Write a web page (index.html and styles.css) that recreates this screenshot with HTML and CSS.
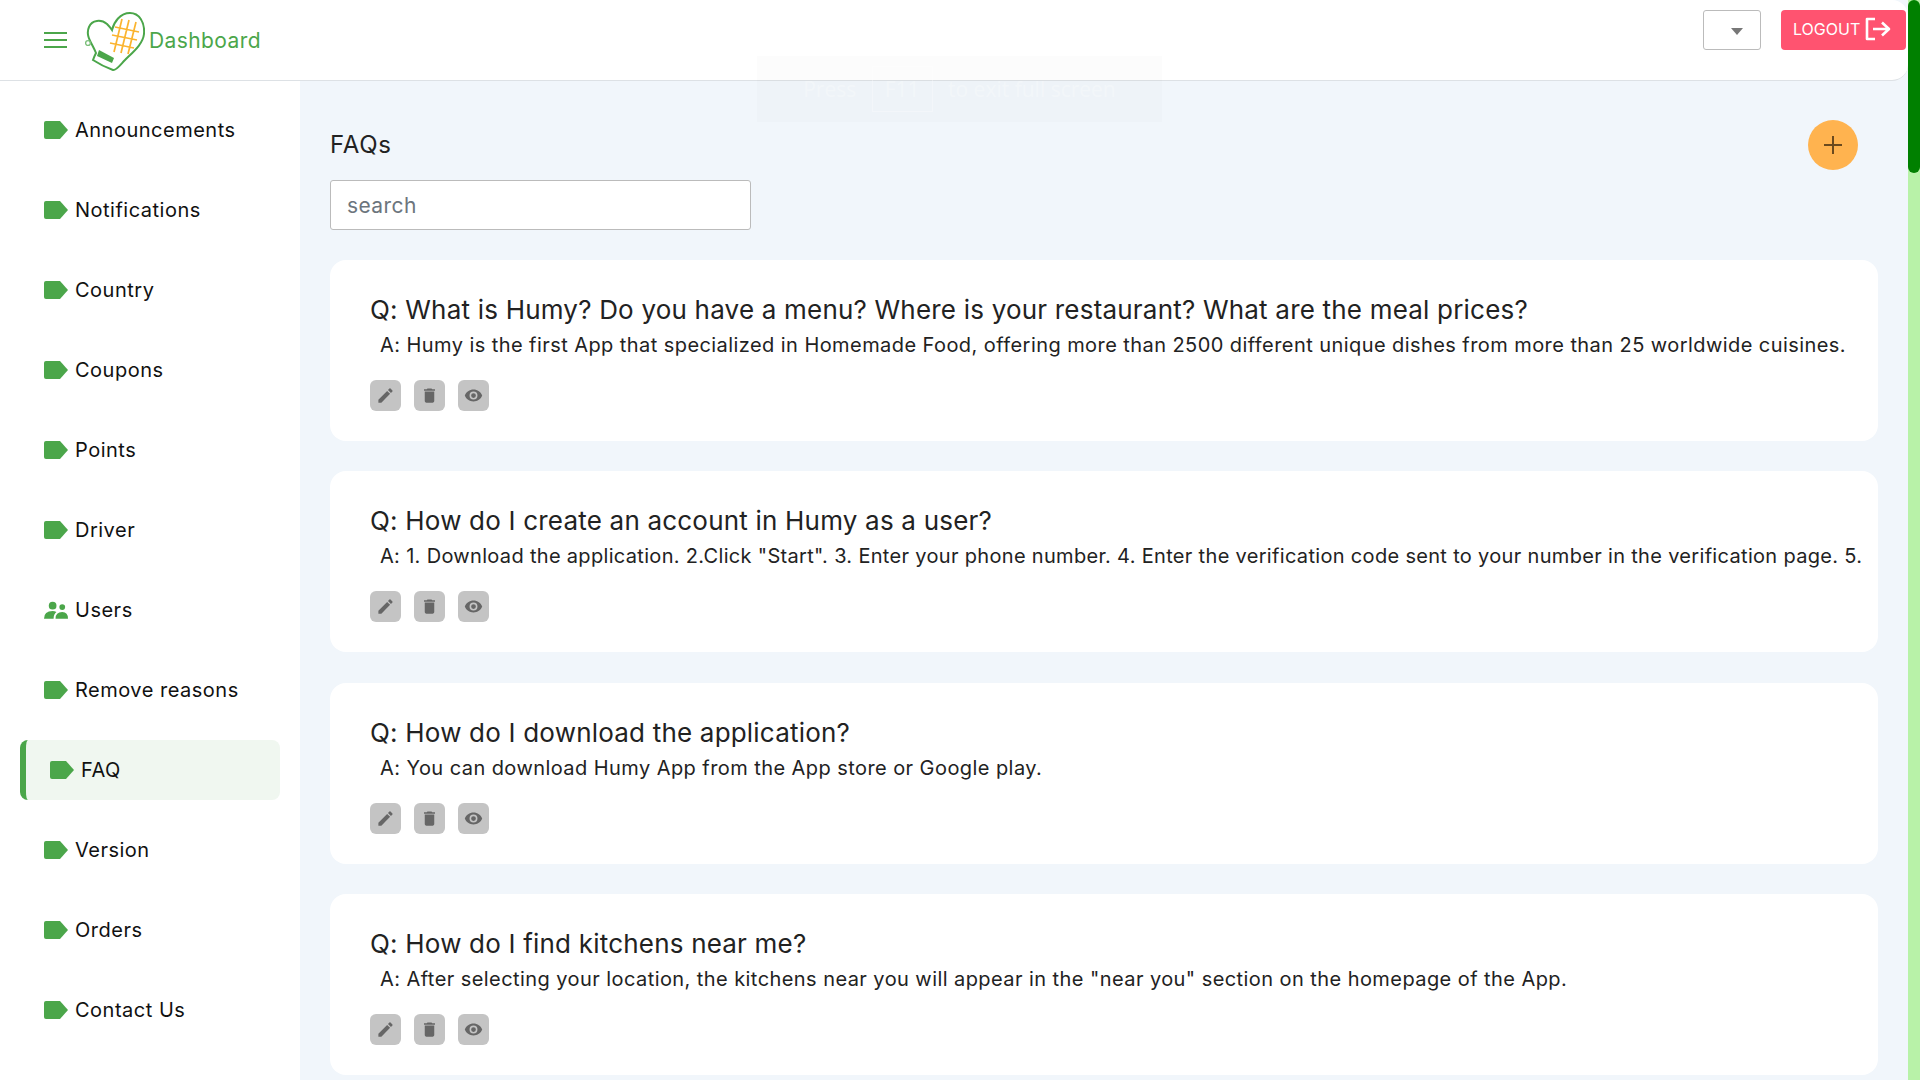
FILE: index.html
```html
<!DOCTYPE html>
<html lang="en">

<head>
    <meta charset="UTF-8">
    <title>Dashboard</title>
    <link rel="stylesheet" href="styles.css">
</head>

<body>
    <div class="app">
        <header class="topbar">
            <div class="brand">
                <button class="menu-btn" aria-label="menu"><span></span><span></span><span></span></button>
                <svg class="logo" viewBox="0 0 60 62" width="60" height="62">
                    <path d="M11 43 C7 33 0 26 4 17 C7 10 16 9 22 14 C25 17 27 20 27 20 C29 12 35 3 45 3 C54 3 60 12 59 24 C58 34 48 42 40 50 C36 54 31 61 28 60 C20 57 14 54 8 50 C9 47 10 45 11 43 Z" fill="none" stroke="#4ba64a" stroke-width="2"/>
                    <path d="M14 40 L12 46 L27 53 L29 48 Z" fill="#4ba64a"/>
                    <circle cx="3" cy="33" r="2.400" fill="none" stroke="#7cbf7b" stroke-width="1.400"/>
                    <path d="M30 17 L54 22 M27 25 L52 30 M25 33 L49 38 M37 9 L29 42 M44 10 L36 43 M51 12 L43 44" fill="none" stroke="#fbb42f" stroke-width="1.700"/>
                </svg>
                <span class="brand-name">Dashboard</span>
            </div>
            <div class="top-actions">
                <button class="lang-select" aria-label="language"><span class="caret"></span></button>
                <button class="logout-btn">LOGOUT
                    <svg viewBox="0 0 26 24" width="26" height="24">
                        <path d="M10 2 H2 V22 H10 M8 12 H24 M17 5.500 L24 12 L17 18.500" fill="none" stroke="#fff" stroke-width="2.600" stroke-linejoin="round"/>
                    </svg>
                </button>
            </div>
        </header>

        <div class="layout">
            <nav class="sidebar">
                <a class="nav-item"><svg class="tag" viewBox="0 0 24 18"><path d="M2 0 H16 L24 9 L16 18 H2 Q0 18 0 16 V2 Q0 0 2 0 Z"/></svg>Announcements</a>
                <a class="nav-item"><svg class="tag" viewBox="0 0 24 18"><path d="M2 0 H16 L24 9 L16 18 H2 Q0 18 0 16 V2 Q0 0 2 0 Z"/></svg>Notifications</a>
                <a class="nav-item"><svg class="tag" viewBox="0 0 24 18"><path d="M2 0 H16 L24 9 L16 18 H2 Q0 18 0 16 V2 Q0 0 2 0 Z"/></svg>Country</a>
                <a class="nav-item"><svg class="tag" viewBox="0 0 24 18"><path d="M2 0 H16 L24 9 L16 18 H2 Q0 18 0 16 V2 Q0 0 2 0 Z"/></svg>Coupons</a>
                <a class="nav-item"><svg class="tag" viewBox="0 0 24 18"><path d="M2 0 H16 L24 9 L16 18 H2 Q0 18 0 16 V2 Q0 0 2 0 Z"/></svg>Points</a>
                <a class="nav-item"><svg class="tag" viewBox="0 0 24 18"><path d="M2 0 H16 L24 9 L16 18 H2 Q0 18 0 16 V2 Q0 0 2 0 Z"/></svg>Driver</a>
                <a class="nav-item"><svg class="tag" viewBox="0 0 25 18"><circle cx="9" cy="4.500" r="4"/><circle cx="19" cy="6" r="3"/><path d="M0 18 Q0 10 9 10 Q11 10 13 11 Q10 13 10 18 Z M12 18 Q12 11 19 11 Q25 11 25 18 Z"/></svg>Users</a>
                <a class="nav-item"><svg class="tag" viewBox="0 0 24 18"><path d="M2 0 H16 L24 9 L16 18 H2 Q0 18 0 16 V2 Q0 0 2 0 Z"/></svg>Remove reasons</a>
                <a class="nav-item active"><svg class="tag" viewBox="0 0 24 18"><path d="M2 0 H16 L24 9 L16 18 H2 Q0 18 0 16 V2 Q0 0 2 0 Z"/></svg>FAQ</a>
                <a class="nav-item"><svg class="tag" viewBox="0 0 24 18"><path d="M2 0 H16 L24 9 L16 18 H2 Q0 18 0 16 V2 Q0 0 2 0 Z"/></svg>Version</a>
                <a class="nav-item"><svg class="tag" viewBox="0 0 24 18"><path d="M2 0 H16 L24 9 L16 18 H2 Q0 18 0 16 V2 Q0 0 2 0 Z"/></svg>Orders</a>
                <a class="nav-item"><svg class="tag" viewBox="0 0 24 18"><path d="M2 0 H16 L24 9 L16 18 H2 Q0 18 0 16 V2 Q0 0 2 0 Z"/></svg>Contact Us</a>
            </nav>

            <main class="content">
                <div class="title-row">
                    <h2>FAQs</h2>
                    <button class="add-btn" aria-label="add"><svg viewBox="0 0 18 18" width="18" height="18"><path d="M9 0 V18 M0 9 H18" stroke="#6b4a1e" stroke-width="2"/></svg></button>
                </div>
                <input class="search" type="text" placeholder="search">

                <section class="faq-card">
                    <h3>Q: What is Humy? Do you have a menu? Where is your restaurant? What are the meal prices?</h3>
                    <p>A: Humy is the first App that specialized in Homemade Food, offering more than 2500 different unique dishes from more than 25 worldwide cuisines.</p>
                    <div class="actions">
                        <button aria-label="edit"><svg viewBox="0 0 24 24"><path d="M3 17.250V21h3.750L17.810 9.940l-3.750-3.750L3 17.250zM20.710 7.040a1 1 0 0 0 0-1.410l-2.340-2.340a1 1 0 0 0-1.410 0l-1.830 1.830 3.750 3.750 1.830-1.830z"/></svg></button>
                        <button aria-label="delete"><svg viewBox="0 0 24 24"><path d="M6 19c0 1.100.9 2 2 2h8c1.100 0 2-.9 2-2V7H6v12zM19 4h-3.500l-1-1h-5l-1 1H5v2h14V4z"/></svg></button>
                        <button aria-label="view"><svg viewBox="0 0 24 24"><path d="M12 4.500C7 4.500 2.730 7.610 1 12c1.730 4.390 6 7.500 11 7.500s9.270-3.110 11-7.500c-1.730-4.390-6-7.500-11-7.500zM12 17a5 5 0 1 1 0-10 5 5 0 0 1 0 10zm0-8a3 3 0 1 0 0 6 3 3 0 0 0 0-6z"/></svg></button>
                    </div>
                </section>

                <section class="faq-card">
                    <h3>Q: How do I create an account in Humy as a user?</h3>
                    <p class="tight">A: 1. Download the application. 2.Click "Start". 3. Enter your phone number. 4. Enter the verification code sent to your number in the verification page. 5.</p>
                    <div class="actions">
                        <button aria-label="edit"><svg viewBox="0 0 24 24"><path d="M3 17.250V21h3.750L17.810 9.940l-3.750-3.750L3 17.250zM20.710 7.040a1 1 0 0 0 0-1.410l-2.340-2.340a1 1 0 0 0-1.410 0l-1.830 1.830 3.750 3.750 1.830-1.830z"/></svg></button>
                        <button aria-label="delete"><svg viewBox="0 0 24 24"><path d="M6 19c0 1.100.9 2 2 2h8c1.100 0 2-.9 2-2V7H6v12zM19 4h-3.500l-1-1h-5l-1 1H5v2h14V4z"/></svg></button>
                        <button aria-label="view"><svg viewBox="0 0 24 24"><path d="M12 4.500C7 4.500 2.730 7.610 1 12c1.730 4.390 6 7.500 11 7.500s9.270-3.110 11-7.500c-1.730-4.390-6-7.500-11-7.500zM12 17a5 5 0 1 1 0-10 5 5 0 0 1 0 10zm0-8a3 3 0 1 0 0 6 3 3 0 0 0 0-6z"/></svg></button>
                    </div>
                </section>

                <section class="faq-card">
                    <h3>Q: How do I download the application?</h3>
                    <p>A: You can download Humy App from the App store or Google play.</p>
                    <div class="actions">
                        <button aria-label="edit"><svg viewBox="0 0 24 24"><path d="M3 17.250V21h3.750L17.810 9.940l-3.750-3.750L3 17.250zM20.710 7.040a1 1 0 0 0 0-1.410l-2.340-2.340a1 1 0 0 0-1.410 0l-1.830 1.830 3.750 3.750 1.830-1.830z"/></svg></button>
                        <button aria-label="delete"><svg viewBox="0 0 24 24"><path d="M6 19c0 1.100.9 2 2 2h8c1.100 0 2-.9 2-2V7H6v12zM19 4h-3.500l-1-1h-5l-1 1H5v2h14V4z"/></svg></button>
                        <button aria-label="view"><svg viewBox="0 0 24 24"><path d="M12 4.500C7 4.500 2.730 7.610 1 12c1.730 4.390 6 7.500 11 7.500s9.270-3.110 11-7.500c-1.730-4.390-6-7.500-11-7.500zM12 17a5 5 0 1 1 0-10 5 5 0 0 1 0 10zm0-8a3 3 0 1 0 0 6 3 3 0 0 0 0-6z"/></svg></button>
                    </div>
                </section>

                <section class="faq-card">
                    <h3>Q: How do I find kitchens near me?</h3>
                    <p>A: After selecting your location, the kitchens near you will appear in the "near you" section on the homepage of the App.</p>
                    <div class="actions">
                        <button aria-label="edit"><svg viewBox="0 0 24 24"><path d="M3 17.250V21h3.750L17.810 9.940l-3.750-3.750L3 17.250zM20.710 7.040a1 1 0 0 0 0-1.410l-2.340-2.340a1 1 0 0 0-1.410 0l-1.830 1.830 3.750 3.750 1.830-1.830z"/></svg></button>
                        <button aria-label="delete"><svg viewBox="0 0 24 24"><path d="M6 19c0 1.100.9 2 2 2h8c1.100 0 2-.9 2-2V7H6v12zM19 4h-3.500l-1-1h-5l-1 1H5v2h14V4z"/></svg></button>
                        <button aria-label="view"><svg viewBox="0 0 24 24"><path d="M12 4.500C7 4.500 2.730 7.610 1 12c1.730 4.390 6 7.500 11 7.500s9.270-3.110 11-7.500c-1.730-4.390-6-7.500-11-7.500zM12 17a5 5 0 1 1 0-10 5 5 0 0 1 0 10zm0-8a3 3 0 1 0 0 6 3 3 0 0 0 0-6z"/></svg></button>
                    </div>
                </section>
            </main>
        </div>
    </div>

    <div class="scrollbar"><div class="scroll-thumb"></div></div>

    <div class="fullscreen-toast">Press <span class="key">F11</span> to exit full screen</div>
</body>

</html>
```

FILE: styles.css
```css
body {
    font-family: Inter, "Open Sans", sans-serif;
    background-color: #f1f6fb;
    color: #222;
    margin: 0;
    height: 100vh;
    overflow: hidden;
    display: flex;
}

button {
    font-family: inherit;
    cursor: pointer;
}

.app {
    flex: 1;
    min-width: 0;
    display: flex;
    flex-direction: column;
}

.topbar {
    height: 80px;
    background-color: white;
    border-bottom: 1px solid #dde1e5;
    border-radius: 0 16px 16px 0;
    display: flex;
    justify-content: space-between;
    align-items: flex-start;
    flex-shrink: 0;
}

.brand {
    display: flex;
    align-items: center;
    height: 80px;
    padding-left: 44px;
}

.menu-btn {
    width: 23px;
    padding: 0;
    border: none;
    background: none;
    display: flex;
    flex-direction: column;
    gap: 5px;
    margin-right: 18px;
}

.menu-btn span {
    display: block;
    height: 2px;
    background-color: #4ba64a;
}

.logo {
    margin-right: 4px;
    margin-top: 1px;
}

.brand-name {
    color: #4ba64a;
    font-size: 21px;
    letter-spacing: 0.4px;
}

.top-actions {
    display: flex;
    gap: 20px;
    padding: 10px 2px 0 0;
}

.lang-select {
    width: 58px;
    height: 40px;
    background-color: white;
    border: 1px solid #bbb;
    border-radius: 3px;
    padding: 0 0 0 10px;
}

.caret {
    display: block;
    width: 0;
    margin: 2px auto 0;
    border-left: 6px solid transparent;
    border-right: 6px solid transparent;
    border-top: 7px solid #777;
}

.logout-btn {
    width: 125px;
    height: 40px;
    background-color: #ff5370;
    color: white;
    border: none;
    border-radius: 4px;
    font-size: 16px;
    display: flex;
    align-items: center;
    gap: 5px;
    padding: 0 0 2px 12px;
}

.layout {
    flex: 1;
    min-height: 0;
    display: flex;
}

.sidebar {
    width: 300px;
    flex-shrink: 0;
    box-sizing: border-box;
    background-color: white;
    padding: 19px 20px 0;
    display: flex;
    flex-direction: column;
    gap: 20px;
}

.nav-item {
    height: 60px;
    display: flex;
    align-items: center;
    gap: 7px;
    padding-left: 24px;
    font-size: 20px;
    letter-spacing: 0.5px;
    color: #111;
    flex-shrink: 0;
}

.nav-item.active {
    background-color: #f0f7f0;
    border-left: 6px solid #4ba64a;
    border-radius: 8px;
}

.tag {
    width: 24px;
    height: 18px;
    fill: #4ba64a;
    flex-shrink: 0;
}

.content {
    flex: 1;
    min-width: 0;
    padding: 39px 30px 0;
    overflow: hidden;
}

.title-row {
    height: 50px;
    display: flex;
    justify-content: space-between;
    align-items: center;
    padding-right: 20px;
    margin-bottom: 10px;
}

.title-row h2 {
    margin: 0 0 2px;
    font-size: 24px;
    font-weight: 400;
    letter-spacing: 0.7px;
}

.add-btn {
    width: 50px;
    height: 50px;
    border: none;
    border-radius: 50%;
    background-color: #ffb34f;
    padding: 0;
    display: flex;
    align-items: center;
    justify-content: center;
}

.search {
    display: block;
    width: 421px;
    height: 50px;
    box-sizing: border-box;
    border: 1px solid #bbb;
    border-radius: 3px;
    padding: 0 16px;
    font-family: inherit;
    font-size: 21px;
    letter-spacing: 0.4px;
    margin-bottom: 30px;
}

.search::placeholder {
    color: #6c757d;
}

.faq-card {
    background-color: white;
    border-radius: 16px;
    padding: 30px 0 30px 40px;
    margin-bottom: 30.3px;
    overflow: hidden;
}

.faq-card h3 {
    margin: 0;
    font-size: 26px;
    line-height: 39px;
    font-weight: 400;
    letter-spacing: 0.2px;
    color: #222;
}

.faq-card p {
    margin: 1px 0 0;
    padding-left: 10px;
    font-size: 20px;
    line-height: 30px;
    letter-spacing: 0.43px;
    white-space: nowrap;
}

.faq-card p.tight {
    letter-spacing: 0.32px;
}

.actions {
    display: flex;
    gap: 13px;
    margin-top: 20px;
}

.actions button {
    width: 31px;
    height: 31px;
    padding: 0;
    border: none;
    border-radius: 6px;
    background-color: #c4c4c4;
    display: flex;
    align-items: center;
    justify-content: center;
}

.actions svg {
    width: 19px;
    height: 19px;
    fill: #666;
}

.scrollbar {
    width: 12px;
    flex-shrink: 0;
    height: 100%;
    background-color: #b8f2a8;
}

.scroll-thumb {
    height: 173px;
    background-color: green;
    border-radius: 6px;
}

/* browser hint, nearly faded out */
.fullscreen-toast {
    position: absolute;
    left: 757px;
    top: 56px;
    width: 405px;
    height: 66px;
    display: flex;
    align-items: center;
    justify-content: center;
    gap: 10px;
    background-color: rgba(0, 0, 0, 0.01);
    color: rgba(255, 255, 255, 0.3);
    font-family: "Open Sans", sans-serif;
    font-size: 21px;
    line-height: 24px;
    white-space: pre;
}

.key {
    border: 1px solid rgba(255, 255, 255, 0.3);
    padding: 10px 12px;
}
```
